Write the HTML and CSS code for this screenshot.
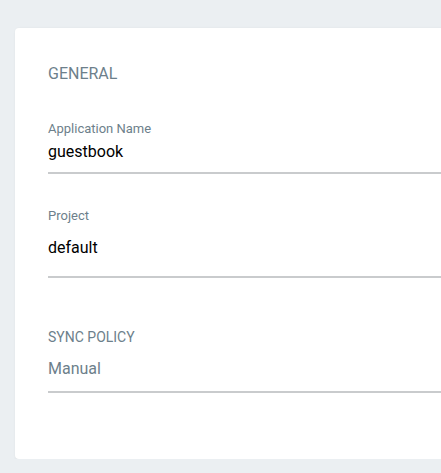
FILE: index.html
```
<!DOCTYPE html>
<html>
<head>
<meta charset="utf-8">
<link rel="stylesheet" href="styles.css">
</head>
<body>
<div class="page">
  <div class="card">
    <div class="section-title">GENERAL</div>
    <div class="field field-app">
      <div class="field-label">Application Name</div>
      <div class="field-value">guestbook</div>
    </div>
    <div class="field field-project">
      <div class="field-label">Project</div>
      <div class="field-value">default</div>
    </div>
    <div class="field field-sync">
      <div class="section-label">SYNC POLICY</div>
      <div class="field-value muted">Manual</div>
    </div>
  </div>
</div>
</body>
</html>
```
FILE: styles.css
```
html, body {
  margin: 0;
  padding: 0;
  background: #ebeff2;
  overflow: hidden;
  font-family: Roboto, "Liberation Sans", sans-serif;
}
.page {
  padding: 28px 0 0 15px;
}
.card {
  width: 520px;
  background: #ffffff;
  border-radius: 4px;
  box-shadow: 1px 1px 3px rgba(0, 0, 0, 0.12);
  padding: 36px 0 66px 33px;
  box-sizing: border-box;
}
.section-title {
  font-size: 16px;
  line-height: 20px;
  color: #6d7f8b;
}
.field {
  border-bottom: 2px solid #c9cbcd;
}
.field-label {
  font-size: 13px;
  line-height: 16px;
  color: #6d7f8b;
}
.field-value {
  font-size: 16px;
  line-height: 24px;
  color: #000000;
}
.field-value.muted {
  color: #6d7f8b;
}
.section-label {
  font-size: 14px;
  line-height: 16px;
  color: #6d7f8b;
}
.field-app {
  margin-top: 37px;
  padding-bottom: 8px;
}
.field-app .field-value {
  margin-top: 3px;
}
.field-project {
  margin-top: 34px;
  padding-bottom: 16px;
}
.field-project .field-value {
  margin-top: 12px;
}
.field-sync {
  margin-top: 51px;
  padding-bottom: 10px;
}
.field-sync .field-value {
  margin-top: 12px;
}
```
